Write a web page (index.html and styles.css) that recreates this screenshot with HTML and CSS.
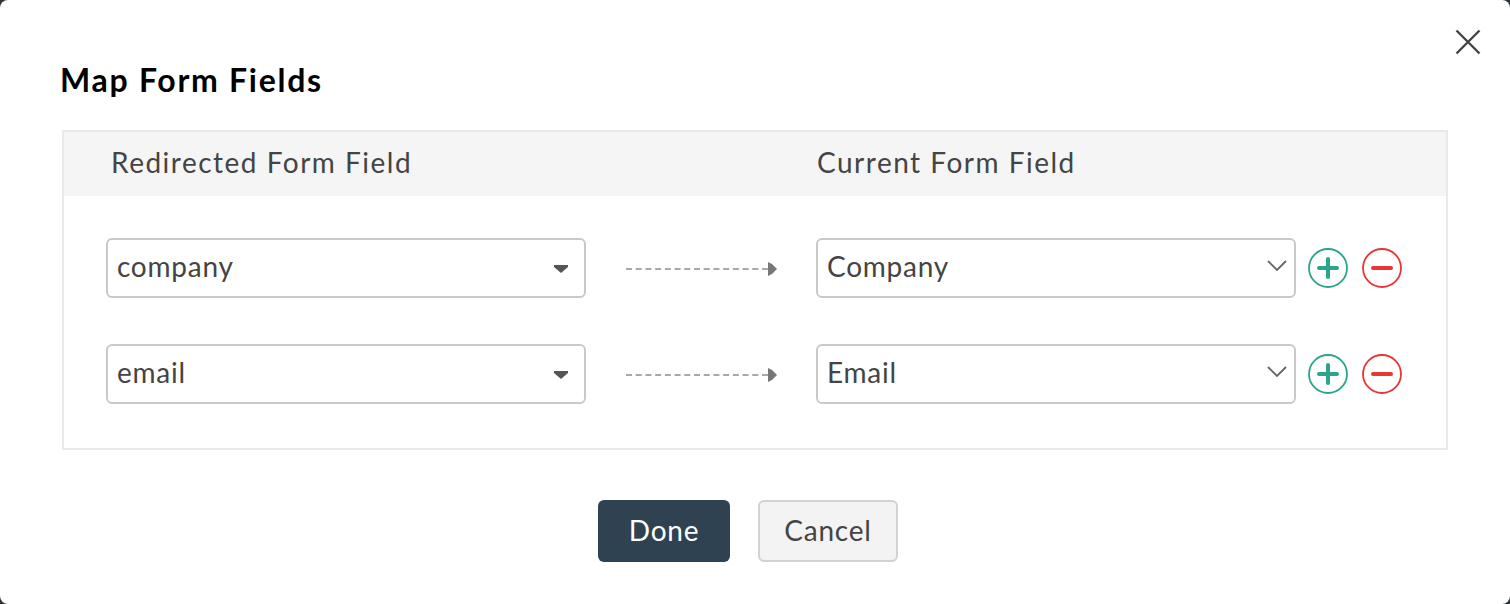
FILE: index.html
```html
<!DOCTYPE html>
<html lang="en">
<head>
<meta charset="utf-8">
<title>Map Form Fields</title>
<link rel="stylesheet" href="styles.css">
</head>
<body>
<div class="modal">
  <button class="close" aria-label="Close">
    <svg width="26" height="26" viewBox="0 0 26 26"><path d="M1.5 1.5L24.5 24.5M24.5 1.5L1.5 24.5" stroke="#444" stroke-width="2.4" fill="none"/></svg>
  </button>
  <h1 class="title">Map Form Fields</h1>
  <div class="panel">
    <div class="panel-head">
      <div class="head-left">Redirected Form Field</div>
      <div class="head-right">Current Form Field</div>
    </div>
    <div class="rows">
      <div class="row">
        <div class="select select-left">
          <span class="value">company</span>
          <svg class="caret" width="14" height="8" viewBox="0 0 14 8"><path d="M0 0H14V2L7 8L0 2Z" fill="#555"/></svg>
        </div>
        <div class="connector"><span class="dash"></span><svg class="head" width="9" height="14" viewBox="0 0 9 14"><path d="M0 0L4 2L9 7L4 12L0 14Z" fill="#777"/></svg></div>
        <div class="select select-right">
          <span class="value">Company</span>
          <svg class="chev" width="20" height="11" viewBox="0 0 20 11"><path d="M1 1L10 10L19 1" stroke="#666" stroke-width="1.8" fill="none"/></svg>
        </div>
        <svg class="act" width="40" height="40" viewBox="0 0 40 40"><circle cx="20" cy="20" r="19" fill="none" stroke="#2aa58b" stroke-width="1.8"/><path d="M20 11V29M11 20H29" stroke="#2aa58b" stroke-width="4" stroke-linecap="round"/></svg>
        <svg class="act" width="40" height="40" viewBox="0 0 40 40"><circle cx="20" cy="20" r="19" fill="none" stroke="#e93535" stroke-width="1.8"/><path d="M11 20H29" stroke="#e93535" stroke-width="4" stroke-linecap="round"/></svg>
      </div>
      <div class="row">
        <div class="select select-left">
          <span class="value">email</span>
          <svg class="caret" width="14" height="8" viewBox="0 0 14 8"><path d="M0 0H14V2L7 8L0 2Z" fill="#555"/></svg>
        </div>
        <div class="connector"><span class="dash"></span><svg class="head" width="9" height="14" viewBox="0 0 9 14"><path d="M0 0L4 2L9 7L4 12L0 14Z" fill="#777"/></svg></div>
        <div class="select select-right">
          <span class="value">Email</span>
          <svg class="chev" width="20" height="11" viewBox="0 0 20 11"><path d="M1 1L10 10L19 1" stroke="#666" stroke-width="1.8" fill="none"/></svg>
        </div>
        <svg class="act" width="40" height="40" viewBox="0 0 40 40"><circle cx="20" cy="20" r="19" fill="none" stroke="#2aa58b" stroke-width="1.8"/><path d="M20 11V29M11 20H29" stroke="#2aa58b" stroke-width="4" stroke-linecap="round"/></svg>
        <svg class="act" width="40" height="40" viewBox="0 0 40 40"><circle cx="20" cy="20" r="19" fill="none" stroke="#e93535" stroke-width="1.8"/><path d="M11 20H29" stroke="#e93535" stroke-width="4" stroke-linecap="round"/></svg>
      </div>
    </div>
  </div>
  <div class="footer">
    <button class="btn btn-primary">Done</button>
    <button class="btn btn-secondary">Cancel</button>
  </div>
</div>
</body>
</html>
```
FILE: styles.css
```css
* { box-sizing: border-box; }
html, body { margin: 0; height: 100%; }
body {
  background: #2f3338;
  font-family: "Lato", "Open Sans", sans-serif;
  overflow: hidden;
}
.modal {
  position: relative;
  width: 1510px;
  height: 604px;
  background: #fff;
  border-radius: 8px;
  padding: 60px 62px 0;
}
.close {
  position: absolute;
  top: 29px;
  right: 29px;
  width: 26px;
  height: 26px;
  padding: 0;
  border: 0;
  background: none;
  display: block;
}
.close svg { display: block; }
.title {
  margin: 0 0 30px -2px;
  height: 40px;
  line-height: 40px;
  font-size: 32px;
  font-weight: 700;
  color: #000;
  letter-spacing: 1.72px;
}
.panel {
  width: 1386px;
  height: 320px;
  border: 2px solid #e9e9e9;
}
.panel-head {
  display: flex;
  height: 64px;
  background: #f5f5f5;
  align-items: center;
  font-size: 28px;
  letter-spacing: 1.5px;
  color: #444;
  padding: 0 0 4px 47px;
}
.head-left { width: 706px; }
.rows {
  display: flex;
  flex-direction: column;
  gap: 46px;
  padding: 42px 0 0 42px;
}
.row { display: flex; align-items: center; height: 60px; }
.select {
  display: flex;
  align-items: center;
  justify-content: space-between;
  height: 60px;
  border: 2px solid #c9c9c9;
  border-radius: 6px;
  font-size: 28px;
  letter-spacing: 0.75px;
  color: #444;
  background: #fff;
  padding-left: 9px;
}
.value { padding-bottom: 4px; }
.select-left { width: 480px; padding-right: 16px; }
.select-right { width: 480px; padding-right: 7px; }
.caret { margin-top: 2px; }
.chev { margin-top: -6px; }
.connector {
  display: flex;
  align-items: center;
  width: 230px;
  padding: 2px 0 0 40px;
}
.dash {
  width: 142px;
  border-top: 2px dashed #a8a8a8;
}
.head { flex: none; }
.act { flex: none; margin-left: 12px; }
.act + .act { margin-left: 14px; }
.footer {
  display: flex;
  justify-content: center;
  gap: 28px;
  margin-top: 50px;
  padding-right: 14px;
}
.btn {
  height: 62px;
  padding: 0 0 2px;
  border-radius: 6px;
  font: inherit;
  font-size: 28px;
  letter-spacing: 0.75px;
}
.btn-primary {
  width: 132px;
  background: #2f4252;
  color: #fff;
  border: 0;
}
.btn-secondary {
  width: 140px;
  background: #f3f3f3;
  color: #444;
  border: 2px solid #d2d2d2;
}
```
